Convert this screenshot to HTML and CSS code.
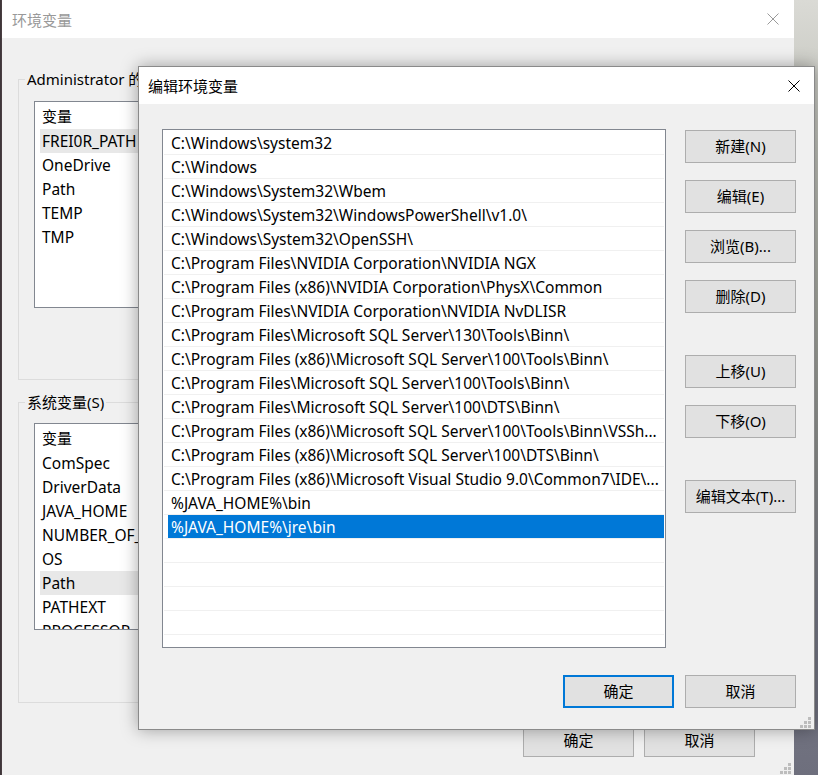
FILE: index.html
```html
<!doctype html>
<html>
<head>
<meta charset="utf-8">
<title>环境变量</title>
<link rel="stylesheet" href="styles.css">
</head>
<body>
<div class="desk">
	<!-- 后面的窗口：环境变量 -->
	<div class="envwin">
		<div class="titlebar">
			<span class="title">环境变量</span>
			<svg class="close" viewBox="0 0 12 12"><path d="M0.5 0.5L11.5 11.5M11.5 0.5L0.5 11.5" stroke="#9a9a9a" stroke-width="1"/></svg>
		</div>
		<div class="envbody">
			<fieldset class="group g1">
				<legend>Administrator 的用户变量(U)</legend>
				<div class="listbox">
					<div class="hdr">变量</div>
					<div class="item hot">FREI0R_PATH</div>
					<div class="item">OneDrive</div>
					<div class="item">Path</div>
					<div class="item">TEMP</div>
					<div class="item">TMP</div>
				</div>
			</fieldset>
			<fieldset class="group g2">
				<legend>系统变量(S)</legend>
				<div class="listbox">
					<div class="hdr">变量</div>
					<div class="item">ComSpec</div>
					<div class="item">DriverData</div>
					<div class="item">JAVA_HOME</div>
					<div class="item">NUMBER_OF_PROCESSORS</div>
					<div class="item">OS</div>
					<div class="item hot">Path</div>
					<div class="item">PATHEXT</div>
					<div class="item">PROCESSOR_ARCHITECTURE</div>
				</div>
			</fieldset>
			<div class="envfoot">
				<button class="btn">确定</button>
				<button class="btn">取消</button>
			</div>
		</div>
		<svg class="grip" viewBox="0 0 12 12"><g fill="#bdbdbd"><rect x="8" y="0" width="3" height="3"/><rect x="4" y="4" width="3" height="3"/><rect x="8" y="4" width="3" height="3"/><rect x="0" y="8" width="3" height="3"/><rect x="4" y="8" width="3" height="3"/><rect x="8" y="8" width="3" height="3"/></g></svg>
	</div>

	<!-- 前面的对话框：编辑环境变量 -->
	<div class="editdlg">
		<div class="titlebar">
			<span class="title">编辑环境变量</span>
			<svg class="close" viewBox="0 0 12 12"><path d="M0.5 0.5L11.5 11.5M11.5 0.5L0.5 11.5" stroke="#000" stroke-width="1"/></svg>
		</div>
		<div class="dlgbody">
			<div class="dlgmain">
				<div class="pathlist">
					<div class="row">C:\Windows\system32</div>
					<div class="row">C:\Windows</div>
					<div class="row">C:\Windows\System32\Wbem</div>
					<div class="row">C:\Windows\System32\WindowsPowerShell\v1.0\</div>
					<div class="row">C:\Windows\System32\OpenSSH\</div>
					<div class="row">C:\Program Files\NVIDIA Corporation\NVIDIA NGX</div>
					<div class="row">C:\Program Files (x86)\NVIDIA Corporation\PhysX\Common</div>
					<div class="row">C:\Program Files\NVIDIA Corporation\NVIDIA NvDLISR</div>
					<div class="row">C:\Program Files\Microsoft SQL Server\130\Tools\Binn\</div>
					<div class="row">C:\Program Files (x86)\Microsoft SQL Server\100\Tools\Binn\</div>
					<div class="row">C:\Program Files\Microsoft SQL Server\100\Tools\Binn\</div>
					<div class="row">C:\Program Files\Microsoft SQL Server\100\DTS\Binn\</div>
					<div class="row">C:\Program Files (x86)\Microsoft SQL Server\100\Tools\Binn\VSSh...</div>
					<div class="row">C:\Program Files (x86)\Microsoft SQL Server\100\DTS\Binn\</div>
					<div class="row">C:\Program Files (x86)\Microsoft Visual Studio 9.0\Common7\IDE\...</div>
					<div class="row">%JAVA_HOME%\bin</div>
					<div class="row sel">%JAVA_HOME%\jre\bin</div>
					<div class="row"></div>
					<div class="row"></div>
					<div class="row"></div>
					<div class="row"></div>
				</div>
				<div class="btncol">
					<button class="btn">新建(N)</button>
					<button class="btn">编辑(E)</button>
					<button class="btn">浏览(B)...</button>
					<button class="btn">删除(D)</button>
					<button class="btn gap">上移(U)</button>
					<button class="btn">下移(O)</button>
					<button class="btn gap">编辑文本(T)...</button>
				</div>
			</div>
			<div class="dlgfoot">
				<button class="btn def">确定</button>
				<button class="btn">取消</button>
			</div>
		</div>
		<svg class="grip" viewBox="0 0 12 12"><g fill="#bdbdbd"><rect x="8" y="0" width="3" height="3"/><rect x="4" y="4" width="3" height="3"/><rect x="8" y="4" width="3" height="3"/><rect x="0" y="8" width="3" height="3"/><rect x="4" y="8" width="3" height="3"/><rect x="8" y="8" width="3" height="3"/></g></svg>
	</div>
</div>
</body>
</html>
```

FILE: styles.css
```css
*{margin:0;padding:0;box-sizing:border-box}
body{width:818px;height:775px;overflow:hidden;font-family:"Noto Sans","Noto Sans CJK SC",sans-serif;font-size:15px;color:#000;
	background:linear-gradient(90deg,#3a3236 0,#4e4245 2px,transparent 2px),
	linear-gradient(180deg,#dadad5 0,#c4c5be 15%,#a6a8a0 40%,#8d8f8e 60%,#777986 80%,#6e6f7d 100%)}
.desk{position:relative;height:775px;padding-left:2px}

/* 公共 */
.titlebar{background:#fff;display:flex;align-items:center;justify-content:space-between}
.close{display:block;width:12px;height:12px}
.btn{width:111px;height:33px;background:#e1e1e1;border:1px solid #adadad;font:inherit;color:#000;line-height:29px}
.btn.def{border:2px solid #0078d7}
.grip{position:absolute;right:2px;bottom:0;width:12px;height:12px}

/* 环境变量窗口 */
.envwin{position:relative;width:792px;height:775px;background:#f0f0f0}
.envwin .titlebar{height:38px;padding:0 15px 0 10px}
.envwin .title{color:#999}
.envbody{padding:0 16px}
.group{border:1px solid #dcdcdc;padding:12px 0 71px 15px}
.group legend{margin-left:-9px;padding:0 2px;line-height:20px}
.g1{margin-top:31px}
.g2{margin-top:12px;padding-top:11px;padding-bottom:72px}
.listbox{width:706px;height:207px;background:#fff;border:1px solid #828790;overflow:hidden}
.listbox .hdr{height:27px;line-height:28px;padding-left:7px}
.listbox .item{height:24px;line-height:24px;margin-left:5px;padding-left:2px;white-space:nowrap;font-size:15.5px}
.listbox .hot{background:#e8e8e8}
.envfoot{display:flex;justify-content:flex-end;gap:10px;margin-top:21px;padding-right:23px}

/* 编辑环境变量对话框 */
.editdlg{position:absolute;left:138px;top:66px;width:677px;height:664px;background:#f0f0f0;border:1px solid #8a8a8a;box-shadow:0 0 16px rgba(0,0,0,.35)}
.editdlg .titlebar{height:37px;padding:0 14px 0 9px}
.dlgbody{padding:25px 18px 0 23px}
.dlgmain{display:flex;align-items:flex-start}
.pathlist{width:504px;height:519px;background:#fff;border:1px solid #828790;overflow:hidden;padding:1px 1px 0}
.pathlist .row{height:24px;line-height:25px;font-size:15.5px;border-bottom:1px solid #f0f0f0;padding-left:7px;white-space:nowrap;overflow:hidden;text-overflow:ellipsis}
.pathlist .sel{background:#0078d7;color:#fff;border-left:4px solid #fff;padding-left:3px}
.btncol{display:flex;flex-direction:column;margin:1px 0 0 19px}
.btncol .btn+.btn{margin-top:17px}
.btncol .btn.gap{margin-top:42px}
.dlgfoot{display:flex;justify-content:flex-end;gap:11px;margin-top:27px}
```
